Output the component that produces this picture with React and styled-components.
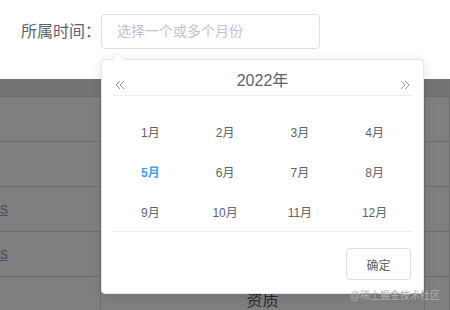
import React from 'react';
import styled, { createGlobalStyle } from "styled-components";

const GlobalStyle = createGlobalStyle`
  body {
    margin: 0;
    font-family: "Liberation Sans", "Noto Sans CJK SC", sans-serif;
  }
`;

const StyledPage = styled.div`
  width: 450px;
  height: 310px;
  position: relative;
  overflow: hidden;
  background: #fff;
`;

const StyledForm = styled.div`
  height: 79px;
  box-sizing: border-box;
  padding: 14px 0 0 21px;
  display: flex;
  align-items: flex-start;
`;

const StyledLabel = styled.label`
  width: 80px;
  height: 35px;
  line-height: 35px;
  font-size: 16px;
  color: #606266;
`;

const StyledInput = styled.div`
  width: 219px;
  height: 35px;
  box-sizing: border-box;
  border: 1px solid #dcdfe6;
  border-radius: 4px;
  padding-left: 15px;
  line-height: 33px;
  font-size: 14px;
  color: #c0c4cc;
`;

const StyledTable = styled.div`
  position: relative;
  background: #fff;

  &::after {
    content: "";
    position: absolute;
    inset: 0;
    background: rgba(0, 0, 0, 0.5);
  }
`;

const StyledRow = styled.div`
  display: grid;
  grid-template-columns: 101px 324px 1fr;
  height: ${(props) => props.height || "45px"};
  box-sizing: border-box;
  background: ${(props) => props.bg || "#fff"};
  border-bottom: 1px solid #dcdcdc;
`;

const StyledCell = styled.div`
  border-right: 1px solid #dcdcdc;
  display: flex;
  align-items: center;
  justify-content: ${(props) => props.align || "flex-start"};
  font-size: 16px;
  color: #555;
`;

const StyledLink = styled.span`
  color: #8aa6d6;
  text-decoration: underline;
  font-size: 16px;
`;

const StyledPopup = styled.div`
  position: absolute;
  left: 101px;
  top: 59px;
  width: 323px;
  height: 235px;
  box-sizing: border-box;
  background: #fff;
  border: 1px solid #e4e7ed;
  border-radius: 4px;
  box-shadow: 0 2px 12px rgba(0, 0, 0, 0.12);
  z-index: 2;
  display: flex;
  flex-direction: column;
`;

const StyledArrow = styled.span`
  position: absolute;
  left: 10px;
  top: -7px;
  width: 0;
  height: 0;
  border: 6px solid transparent;
  border-top-width: 0;
  border-bottom-color: #e4e7ed;

  &::after {
    content: "";
    position: absolute;
    left: -6px;
    top: 1px;
    border: 6px solid transparent;
    border-top-width: 0;
    border-bottom-color: #fff;
  }
`;

const StyledHeader = styled.div`
  margin: 0 11px;
  height: 36px;
  box-sizing: border-box;
  padding: 10px 2px 0;
  border-bottom: 1px solid #ebeef5;
  display: flex;
  justify-content: space-between;
  align-items: flex-start;
`;

const StyledYear = styled.span`
  font-size: 16px;
  line-height: 22px;
  color: #606266;
`;

const StyledNav = styled.span`
  display: flex;
  padding-top: 10px;
  color: #909399;
`;

const StyledMonths = styled.div`
  margin: 0 11px;
  padding-top: 15px;
  height: 136px;
  box-sizing: border-box;
  border-bottom: 1px solid #ebeef5;
  display: grid;
  grid-template-columns: repeat(4, 1fr);
  grid-auto-rows: 40px;
`;

const StyledMonth = styled.span`
  display: flex;
  align-items: center;
  justify-content: center;
  font-size: 12px;
  color: ${(props) => (props.active ? "#409eff" : "#606266")};
  font-weight: ${(props) => (props.active ? "700" : "400")};
`;

const StyledFooter = styled.div`
  display: flex;
  justify-content: flex-end;
  padding: 16px 12px 0 0;
`;

const StyledButton = styled.button`
  width: 65px;
  height: 32px;
  box-sizing: border-box;
  background: #fff;
  border: 1px solid #dcdfe6;
  border-radius: 4px;
  font-family: inherit;
  font-size: 12px;
  color: #606266;
`;

const StyledMark = styled.span`
  position: absolute;
  right: 10px;
  bottom: 8px;
  z-index: 3;
  font-size: 10px;
  color: #b0b0b0;
`;

const DoubleArrow = ({ dir }) => (
  <svg width="10" height="10" viewBox="0 0 10 10" fill="none" stroke="currentColor" strokeWidth="1">
    {dir === "left" ? (
      <path d="M5 1 L1 5 L5 9 M9 1 L5 5 L9 9" />
    ) : (
      <path d="M1 1 L5 5 L1 9 M5 1 L9 5 L5 9" />
    )}
  </svg>
);

const months = ["1月", "2月", "3月", "4月", "5月", "6月", "7月", "8月", "9月", "10月", "11月", "12月"];

const App = () => {
  return (
    <StyledPage>
      <GlobalStyle />
      <StyledForm>
        <StyledLabel>所属时间：</StyledLabel>
        <StyledInput>选择一个或多个月份</StyledInput>
      </StyledForm>

      <StyledTable>
        <StyledRow height={"18px"} bg={"#e8e8e8"}>
          <StyledCell /><StyledCell /><StyledCell />
        </StyledRow>
        <StyledRow>
          <StyledCell /><StyledCell /><StyledCell />
        </StyledRow>
        <StyledRow>
          <StyledCell /><StyledCell /><StyledCell />
        </StyledRow>
        <StyledRow>
          <StyledCell><StyledLink>s</StyledLink></StyledCell><StyledCell /><StyledCell />
        </StyledRow>
        <StyledRow>
          <StyledCell><StyledLink>s</StyledLink></StyledCell><StyledCell /><StyledCell />
        </StyledRow>
        <StyledRow>
          <StyledCell /><StyledCell align={"center"}>资质</StyledCell><StyledCell />
        </StyledRow>
      </StyledTable>

      <StyledPopup>
        <StyledArrow />
        <StyledHeader>
          <StyledNav><DoubleArrow dir="left" /></StyledNav>
          <StyledYear>2022年</StyledYear>
          <StyledNav><DoubleArrow dir="right" /></StyledNav>
        </StyledHeader>
        <StyledMonths>
          {months.map((m) => (
            <StyledMonth key={m} active={m === "5月"}>{m}</StyledMonth>
          ))}
        </StyledMonths>
        <StyledFooter>
          <StyledButton>确定</StyledButton>
        </StyledFooter>
      </StyledPopup>

      <StyledMark>@稀土掘金技术社区</StyledMark>
    </StyledPage>
  );
}

export default App;
